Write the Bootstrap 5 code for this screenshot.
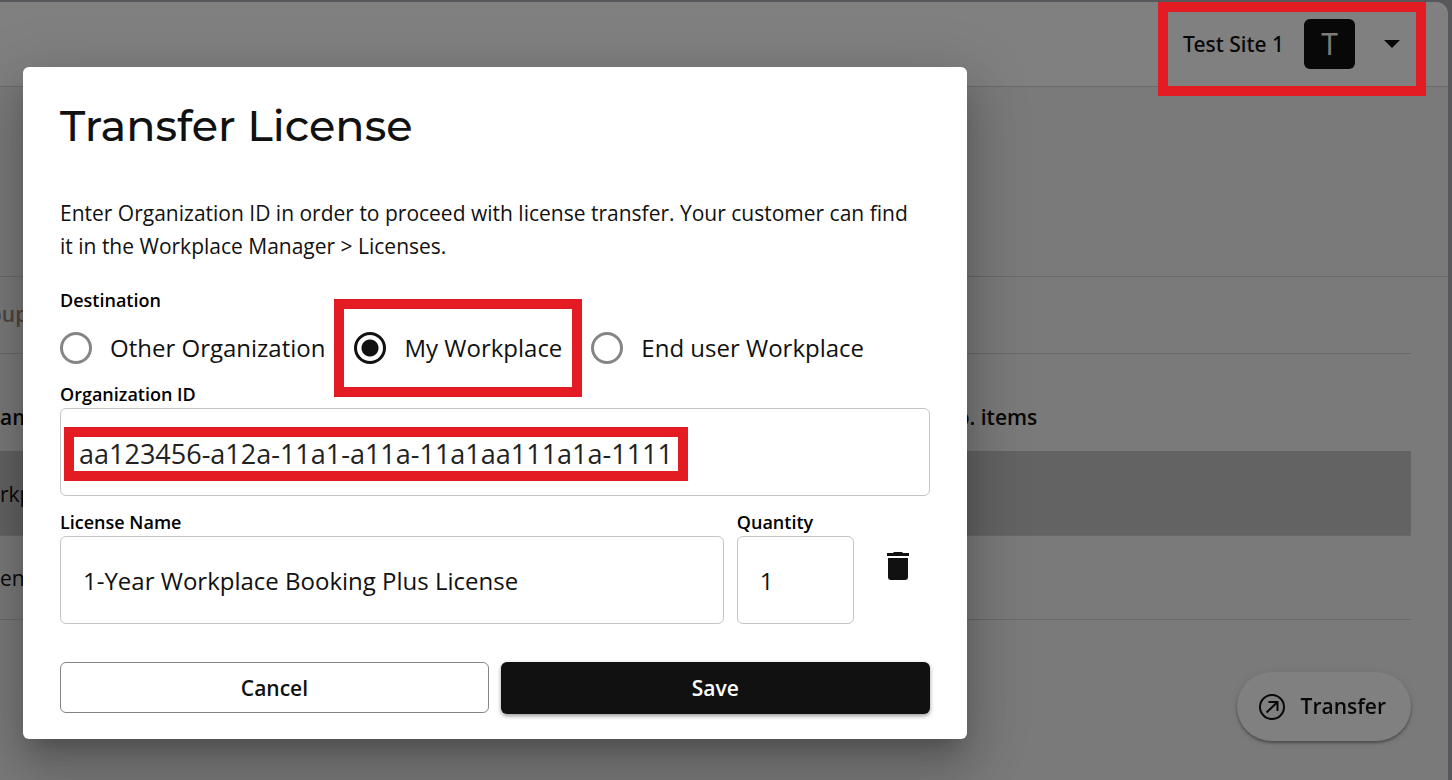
<!DOCTYPE html>
<html lang="en">
<head>
<meta charset="utf-8">
<meta name="viewport" content="width=device-width, initial-scale=1">
<title>Transfer License</title>
<link href="https://cdn.jsdelivr.net/npm/bootstrap@5.3.0/dist/css/bootstrap.min.css" rel="stylesheet">
<style>
  :root { --ink: #111; --mark-red: #e31b23; --rule: #696969; }
  body { font-family: "Open Sans", "Noto Sans", sans-serif; font-size: 21px; color: #080808; background: #57575c; }
  .shell { padding: 2px 4px 0 0; overflow: hidden; }
  .panel { background: #7a7a7a; border-top-right-radius: 12px; overflow: hidden; }
  .topbar { height: 85px; background: #808080; border-bottom: 1px solid var(--rule); padding-right: 48px; }
  .account { font-family: "Noto Sans", "Open Sans", sans-serif; font-size: 21px; font-weight: 500; line-height: 32px; color: #080808; background: none; border: 0; gap: 20px; }
  .avatar { width: 51px; height: 50px; margin-right: 9px; border-radius: 6px; background: #080808; color: #7e7a74; font-size: 30px; font-weight: 400; }
  .callout { position: absolute; border: 10px solid var(--mark-red); pointer-events: none; }
  .callout-account { inset: -17px -26px -27px -25px; }
  .callout-radio { inset: -33px -20px -33px -20px; }
  .callout-id { inset: 19px auto auto 4px; width: 624px; height: 54px; max-width: 100%; }
  .summary { height: 190px; border-bottom: 1px solid var(--rule); }
  .content-area { margin-right: 37px; }
  .tabs-row { height: 77px; margin-left: -11px; border-bottom: 1px solid var(--rule); }
  .tabs-row a { color: #51453e; font-weight: 600; text-decoration: none; }
  .list-table { width: 100%; table-layout: fixed; }
  .list-table th, .list-table td { padding: 0; vertical-align: middle; }
  .list-table th { height: 97px; padding-top: 30px; font-weight: 600; }
  .list-table th:first-child { width: 66%; }
  .list-table th + th { padding-left: 9px; }
  .list-table td { height: 84px; padding-top: 3px; border-bottom: 1px solid var(--rule); }
  .list-table .chosen td { background: #636363; }
  .fab { position: fixed; right: 41px; bottom: 39px; height: 69px; padding: 0 25px 0 22px; gap: 16px; border: 0; border-radius: 35px; background: #808080; color: #080808; font-size: 21px; font-weight: 600; box-shadow: 0 2px 3px rgba(0,0,0,.35), 0 1px 10px rgba(0,0,0,.08); }
  .dialog { position: absolute; top: 67px; left: 23px; width: 65%; padding: 26px 37px 25px; background: #fff; color: var(--ink); border-radius: 6px; box-shadow: 0 15px 20px -9px rgba(0,0,0,.2), 0 32px 50px 4px rgba(0,0,0,.14), 0 12px 60px 11px rgba(0,0,0,.12); }
  .dialog h1 { font-family: Montserrat, Inter, sans-serif; font-size: 43px; font-weight: 500; line-height: 66px; margin-bottom: 38px; }
  .dialog p { line-height: 33px; margin-bottom: 23px; padding-right: 6px; }
  .field-title { display: block; float: none; font-size: 18px; font-weight: 600; line-height: 28px; margin: 0; color: #000; }
  .choices { gap: 29px; margin: 18px 0 16px; }
  .choice { gap: 18px; font-size: 24px; line-height: 32px; }
  .choice input { appearance: none; width: 32px; height: 32px; margin: 0; border: 3px solid #858585; border-radius: 50%; }
  .choice input:checked { border-color: var(--ink); background: radial-gradient(circle, var(--ink) 8px, transparent 9px); }
  .box-input { height: 88px; padding: 0 22px; font-size: 24px; color: var(--ink); border: 1px solid #c4c4c4; border-radius: 6px; }
  .id-input { padding: 2px 18px 0; font-size: 27px; color: #222; }
  .license-row { gap: 13px; margin: 12px 0 38px; }
  .qty-col { width: 117px; }
  .trash-btn { width: 63px; background: none; border: 0; line-height: 0; }
  .actions { gap: 12px; }
  .actions .btn { flex: 1 1 0; height: 52px; padding: 2px 0 0; font-size: 21px; font-weight: 600; border-radius: 6px; }
  .actions .btn-cancel { height: 51px; border-color: #858585; color: var(--ink); }
  .btn-save { background: var(--ink); color: #fff; box-shadow: 0 2px 4px rgba(0,0,0,.4); }
</style>
</head>
<body>
<div class="shell min-vh-100 d-flex flex-column">
  <main class="panel flex-grow-1">
    <header class="topbar d-flex align-items-center justify-content-end">
      <button type="button" class="account position-relative d-flex align-items-center p-0">
        <span>Test Site 1</span>
        <span class="avatar d-flex align-items-center justify-content-center">T</span>
        <svg width="16" height="8" viewBox="0 0 16 8" aria-hidden="true"><path d="M0 0h16L8 8z" fill="#080808"/></svg>
        <span class="callout callout-account"></span>
      </button>
    </header>
    <div class="summary"></div>
    <div class="content-area">
      <nav class="tabs-row d-flex align-items-center"><a href="#">oup</a></nav>
      <table class="list-table">
        <thead><tr><th scope="col">am</th><th scope="col">No. items</th></tr></thead>
        <tbody>
          <tr class="chosen"><td>rkp</td><td></td></tr>
          <tr><td>ent</td><td></td></tr>
        </tbody>
      </table>
    </div>
  </main>
</div>

<button type="button" class="fab d-flex align-items-center">
  <svg width="26" height="26" viewBox="0 0 26 26" fill="none" stroke="#080808" stroke-width="2" aria-hidden="true"><circle cx="13" cy="13" r="12"/><path d="M7.500 18.500 18.500 8M9.500 8h9v9"/></svg>
  <span>Transfer</span>
</button>

<form class="dialog" role="dialog" aria-labelledby="dialog-title">
  <h1 id="dialog-title">Transfer License</h1>
  <p>Enter Organization ID in order to proceed with license transfer. Your customer can find it in the Workplace Manager &gt; Licenses.</p>
  <fieldset>
    <legend class="field-title">Destination</legend>
    <div class="choices d-flex">
      <label class="choice d-flex align-items-center"><input type="radio" name="destination"><span>Other Organization</span></label>
      <label class="choice d-flex align-items-center position-relative"><input type="radio" name="destination" checked><span>My Workplace</span><span class="callout callout-radio"></span></label>
      <label class="choice d-flex align-items-center"><input type="radio" name="destination"><span>End user Workplace</span></label>
    </div>
  </fieldset>
  <label class="field-title" for="org-id">Organization ID</label>
  <div class="position-relative">
    <input id="org-id" type="text" class="form-control box-input id-input" value="aa123456-a12a-11a1-a11a-11a1aa111a1a-1111">
    <span class="callout callout-id"></span>
  </div>
  <div class="license-row d-flex align-items-center">
    <div class="flex-grow-1">
      <label class="field-title" for="license">License Name</label>
      <input id="license" type="text" class="form-control box-input" value="1-Year Workplace Booking Plus License">
    </div>
    <div class="qty-col">
      <label class="field-title" for="qty">Quantity</label>
      <input id="qty" type="text" class="form-control box-input" value="1">
    </div>
    <button type="button" class="trash-btn p-0" aria-label="Remove license">
      <svg width="22" height="28" viewBox="0 0 22 28" fill="#111" aria-hidden="true"><path d="M0 1h6l1-1h8l1 1h6v3H0zM1 6h20v19q0 3-3 3H4q-3 0-3-3z"/></svg>
    </button>
  </div>
  <div class="actions d-flex">
    <button type="button" class="btn btn-cancel">Cancel</button>
    <button type="submit" class="btn btn-save">Save</button>
  </div>
</form>
<script src="https://cdn.jsdelivr.net/npm/bootstrap@5.3.0/dist/js/bootstrap.bundle.min.js"></script>
</body>
</html>
